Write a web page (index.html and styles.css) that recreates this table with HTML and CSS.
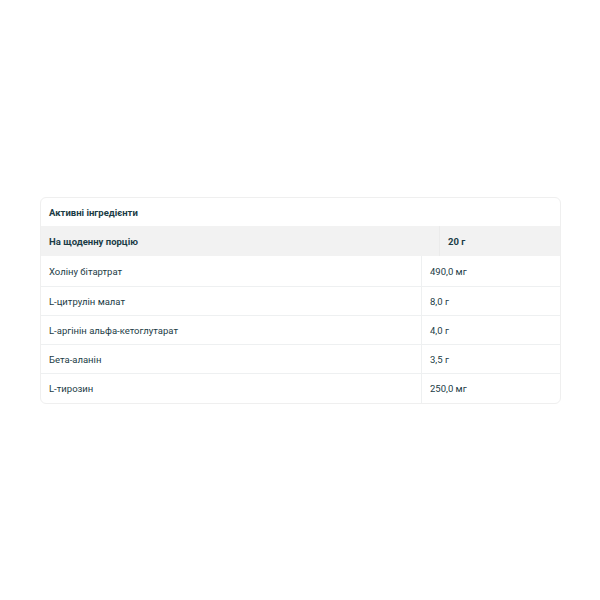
FILE: index.html
```html
<!DOCTYPE html>
<html lang="uk">
<head>
<meta charset="utf-8">
<link rel="stylesheet" href="styles.css">
</head>
<body>
<div class="page">
  <div class="card">
    <div class="title">Активні інгредієнти</div>
    <div class="head-row">
      <div class="cell name">На щоденну порцію</div>
      <div class="cell val">20 г</div>
    </div>
    <div class="body">
      <div class="row"><div class="cell name">Холіну бітартрат</div><div class="cell val">490,0 мг</div></div>
      <div class="row"><div class="cell name">L-цитрулін малат</div><div class="cell val">8,0 г</div></div>
      <div class="row"><div class="cell name">L-аргінін альфа-кетоглутарат</div><div class="cell val">4,0 г</div></div>
      <div class="row"><div class="cell name">Бета-аланін</div><div class="cell val">3,5 г</div></div>
      <div class="row"><div class="cell name">L-тирозин</div><div class="cell val">250,0 мг</div></div>
    </div>
  </div>
</div>
</body>
</html>
```
FILE: styles.css
```css
* { box-sizing: border-box; }
html, body { margin: 0; padding: 0; background: #fff; }
body {
  font-family: Roboto, "Noto Sans", sans-serif;
  font-size: 9.5px;
  color: #1b3c46;
}
.page {
  width: 600px;
  height: 600px;
  padding: 197px 39px 0 40px;
}
.card {
  border: 1px solid #efefef;
  border-radius: 6px;
  overflow: hidden;
}
.title {
  height: 28px;
  display: flex;
  align-items: center;
  padding: 0 8px;
  font-weight: 700;
}
.head-row {
  display: grid;
  grid-template-columns: 398px 1fr;
  height: 30px;
  background: #f2f2f2;
  font-weight: 700;
}
.head-row .val { border-left: 1px solid #ebebeb; padding-left: 8px; }
.cell {
  display: flex;
  align-items: center;
  padding: 0 8px;
}
.row {
  display: grid;
  grid-template-columns: 380px 1fr;
  height: 29px;
  border-top: 1px solid #eef0f1;
}
.row:first-child { border-top: none; height: 30px; }
.row:last-child { height: 30px; }
.row .val { border-left: 1px solid #eef0f1; padding-left: 8px; }
```
